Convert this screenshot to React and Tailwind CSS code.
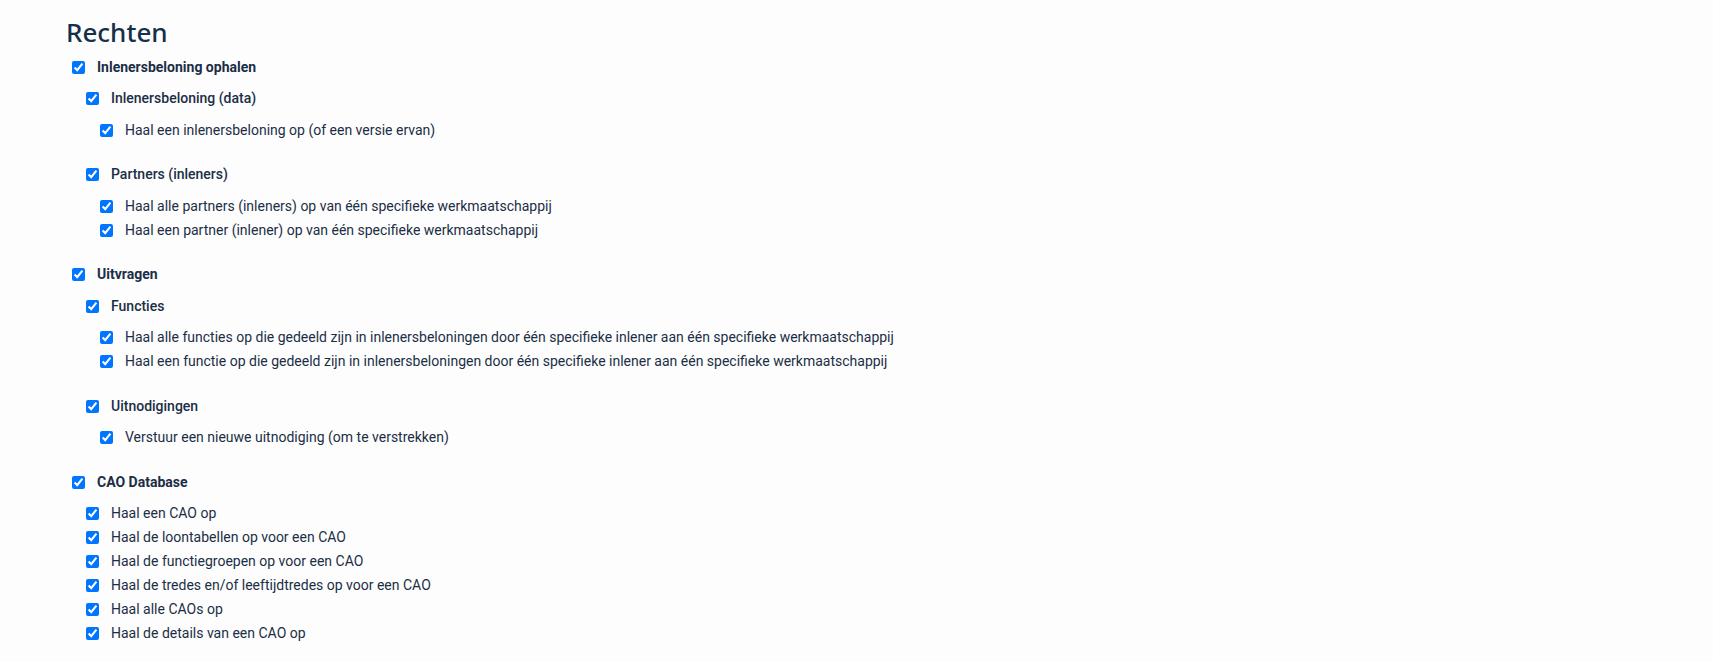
import React from "react";

const sections = [
  {
    title: "Inlenersbeloning ophalen",
    groups: [
      {
        title: "Inlenersbeloning (data)",
        items: ["Haal een inlenersbeloning op (of een versie ervan)"],
      },
      {
        title: "Partners (inleners)",
        items: [
          "Haal alle partners (inleners) op van één specifieke werkmaatschappij",
          "Haal een partner (inlener) op van één specifieke werkmaatschappij",
        ],
      },
    ],
  },
  {
    title: "Uitvragen",
    groups: [
      {
        title: "Functies",
        items: [
          "Haal alle functies op die gedeeld zijn in inlenersbeloningen door één specifieke inlener aan één specifieke werkmaatschappij",
          "Haal een functie op die gedeeld zijn in inlenersbeloningen door één specifieke inlener aan één specifieke werkmaatschappij",
        ],
      },
      {
        title: "Uitnodigingen",
        items: ["Verstuur een nieuwe uitnodiging (om te verstrekken)"],
      },
    ],
  },
  {
    title: "CAO Database",
    items: [
      "Haal een CAO op",
      "Haal de loontabellen op voor een CAO",
      "Haal de functiegroepen op voor een CAO",
      "Haal de tredes en/of leeftijdtredes op voor een CAO",
      "Haal alle CAOs op",
      "Haal de details van een CAO op",
    ],
  },
];

function Check({ label, weight }) {
  return (
    <label className="flex h-6 items-center gap-3">
      <input type="checkbox" defaultChecked className="m-0 h-[13px] w-[13px] shrink-0" />
      <span className={`text-[14px] ${weight} whitespace-nowrap`}>{label}</span>
    </label>
  );
}

function Leaves({ items }) {
  return (
    <div className="mt-[7.5px] flex flex-col pl-[14px]">
      {items.map((it) => (
        <Check key={it} label={it} weight="font-normal" />
      ))}
    </div>
  );
}

export default function App() {
  return (
    <div
      className="min-h-[662px] bg-[#fdfdfd] pl-[66px] pt-4 text-[#1b2e45]"
      style={{ fontFamily: "Roboto, 'Liberation Sans', sans-serif" }}
    >
      <h1
        className="text-[26px] leading-8 font-medium text-[#14304a]"
        style={{ fontFamily: "'Noto Sans', 'Open Sans', sans-serif" }}
      >
        Rechten
      </h1>
      <div className="mt-[7px] flex flex-col gap-[20.5px] pl-[6px]">
        {sections.map((s) => (
          <div key={s.title} className="flex flex-col">
            <Check label={s.title} weight="font-bold" />
            {s.groups ? (
              <div className="mt-[7.5px] flex flex-col gap-[20.5px] pl-[14px]">
                {s.groups.map((g) => (
                  <div key={g.title} className="flex flex-col">
                    <Check label={g.title} weight="font-medium" />
                    <Leaves items={g.items} />
                  </div>
                ))}
              </div>
            ) : (
              <Leaves items={s.items} />
            )}
          </div>
        ))}
      </div>
    </div>
  );
}
